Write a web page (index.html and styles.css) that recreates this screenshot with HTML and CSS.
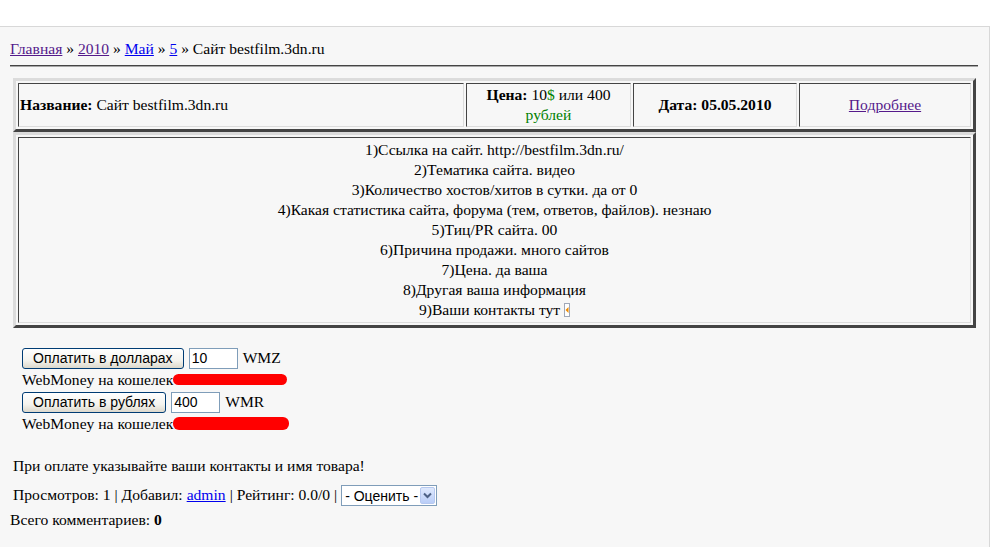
FILE: index.html
```html
<!DOCTYPE html>
<html lang="ru">
<head>
    <meta charset="utf-8">
    <title>Сайт bestfilm.3dn.ru</title>
    <link rel="stylesheet" href="styles.css">
</head>
<body>
    <div class="topbar"></div>
    <div class="page">
        <div class="crumbs">
            <a href="#" class="visited">Главная</a> &raquo; <a href="#" class="visited">2010</a> &raquo; <a href="#">Май</a> &raquo; <a href="#">5</a> &raquo; Сайт bestfilm.3dn.ru
        </div>
        <div class="rule"></div>

        <table class="box info">
            <tr>
                <td class="c-name"><b>Название:</b> Сайт bestfilm.3dn.ru</td>
                <td class="c-price"><b>Цена:</b> 10<span class="green">$</span> или 400 <span class="green">рублей</span></td>
                <td class="c-date"><b>Дата: 05.05.2010</b></td>
                <td class="c-more"><a href="#" class="visited">Подробнее</a></td>
            </tr>
        </table>

        <table class="box desc">
            <tr>
                <td>
                    1)Ссылка на сайт. http://bestfilm.3dn.ru/<br>
                    2)Тематика сайта. видео<br>
                    3)Количество хостов/хитов в сутки. да от 0<br>
                    4)Какая статистика сайта, форума (тем, ответов, файлов). незнаю<br>
                    5)Тиц/PR сайта. 00<br>
                    6)Причина продажи. много сайтов<br>
                    7)Цена. да ваша<br>
                    8)Другая ваша информация<br>
                    9)Ваши контакты тут <svg class="marker" width="6" height="14" viewBox="0 0 6 14"><rect x="0.5" y="0.5" width="5" height="13" fill="#fff" stroke="#a0a8b8"/><path d="M4.5 4 L1.5 7 L4.5 10 Z" fill="#f08c00"/></svg>
                </td>
            </tr>
        </table>

        <div class="pay">
            <div class="pay-row">
                <button class="xp-btn">Оплатить в долларах</button>
                <input class="xp-input" type="text" value="10">
                <span>WMZ</span>
            </div>
            <div class="wallet">WebMoney на кошелек<span class="redact r1"></span></div>
            <div class="pay-row">
                <button class="xp-btn">Оплатить в рублях</button>
                <input class="xp-input" type="text" value="400">
                <span>WMR</span>
            </div>
            <div class="wallet">WebMoney на кошелек <span class="redact r2"></span></div>
        </div>

        <div class="note">При оплате указывайте ваши контакты и имя товара!</div>

        <div class="stats">
            Просмотров: 1 | Добавил: <a href="#">admin</a> | Рейтинг: 0.0/0 |
            <span class="rate">
                <select class="xp-select">
                    <option>- Оценить -</option>
                </select>
                <span class="rate-arrow"><svg width="9" height="7" viewBox="0 0 9 7"><path d="M1 1.5 L4.5 5 L8 1.5" fill="none" stroke="#4d6185" stroke-width="2"/></svg></span>
            </span>
        </div>

        <div class="comments">Всего комментариев: <b>0</b></div>
    </div>
</body>
</html>
```
FILE: styles.css
```css
body {
    margin: 0;
    background: #fff;
    font-family: "Liberation Serif", "Times New Roman", serif;
    font-size: 15.6px;
    color: #000;
}
a {
    color: #0000ee;
}
a.visited {
    color: #551a8b;
}
.green {
    color: #008000;
}

.topbar {
    height: 26px;
}
.page {
    width: 968px;
    height: 520px;
    padding: 0 11px 0 10px;
    background: #f7f7f7;
    border-top: 1px solid #d8d8d8;
    border-right: 1px solid #d8d8d8;
}

.crumbs {
    padding-top: 12px;
    line-height: 20px;
}
.rule {
    margin-top: 6px;
    height: 1px;
    background: #444;
    border-bottom: 1px solid #a8a8a8;
}

.box {
    width: 963px;
    margin: 0 0 0 3px;
    border-spacing: 2px;
    border-style: solid;
    border-width: 3px;
    border-color: #dcdcdc #444 #444 #dcdcdc;
    line-height: 20px;
}
.box td {
    border-style: solid;
    border-width: 1px;
    border-color: #444 #dcdcdc #dcdcdc #444;
    padding: 1px;
}
.info {
    margin-top: 11px;
}
.info td {
    height: 40px;
    vertical-align: middle;
}
.c-name {
    width: 442px;
}
.c-price {
    width: 161px;
    text-align: center;
}
.c-date {
    width: 160px;
    text-align: center;
}
.c-more {
    text-align: center;
}
.desc td {
    text-align: center;
    padding: 2px;
}
.marker {
    vertical-align: -2px;
}

.pay {
    margin-top: 19px;
    padding-left: 12px;
}
.pay-row {
    display: flex;
    align-items: center;
    gap: 5px;
    height: 22px;
}
.xp-btn {
    height: 21px;
    padding: 0 10px;
    font-family: "Liberation Sans", Tahoma, sans-serif;
    font-size: 14px;
    color: #000;
    border: 1px solid #003c74;
    border-radius: 3px;
    background: linear-gradient(#ffffff, #f4f3ee 60%, #dcd8cc);
}
.xp-input {
    width: 43px;
    height: 19px;
    padding: 0 2px;
    font-family: "Liberation Sans", Tahoma, sans-serif;
    font-size: 14px;
    border: 1px solid #7f9db9;
    background: #fff;
}
.wallet {
    height: 22px;
    line-height: 22px;
    display: flex;
    align-items: center;
}
.redact {
    display: inline-block;
    background: #ff0000;
    border-radius: 6px;
}
.r1 {
    width: 114px;
    height: 11px;
    margin-top: -2px;
}
.r2 {
    width: 116px;
    height: 13px;
    margin-top: -1px;
}

.note {
    margin-top: 21px;
    padding-left: 3px;
    line-height: 20px;
}
.stats {
    margin-top: 8px;
    padding-left: 3px;
    line-height: 22px;
    display: flex;
    align-items: center;
    gap: 4px;
}
.rate {
    position: relative;
    display: inline-block;
    height: 21px;
}
.xp-select {
    appearance: none;
    width: 96px;
    height: 21px;
    padding: 0 0 0 3px;
    font-family: "Liberation Sans", Tahoma, sans-serif;
    font-size: 14px;
    border: 1px solid #7f9db9;
    border-radius: 0;
    background: #fff;
    color: #000;
}
.rate-arrow {
    position: absolute;
    top: 2px;
    right: 2px;
    width: 15px;
    height: 17px;
    display: flex;
    align-items: center;
    justify-content: center;
    background: linear-gradient(#dfe9fd, #b9cdf7);
    border: 1px solid #b6c8ef;
    box-sizing: border-box;
    border-radius: 2px;
}
.comments {
    margin-top: 4px;
    line-height: 20px;
}
```
